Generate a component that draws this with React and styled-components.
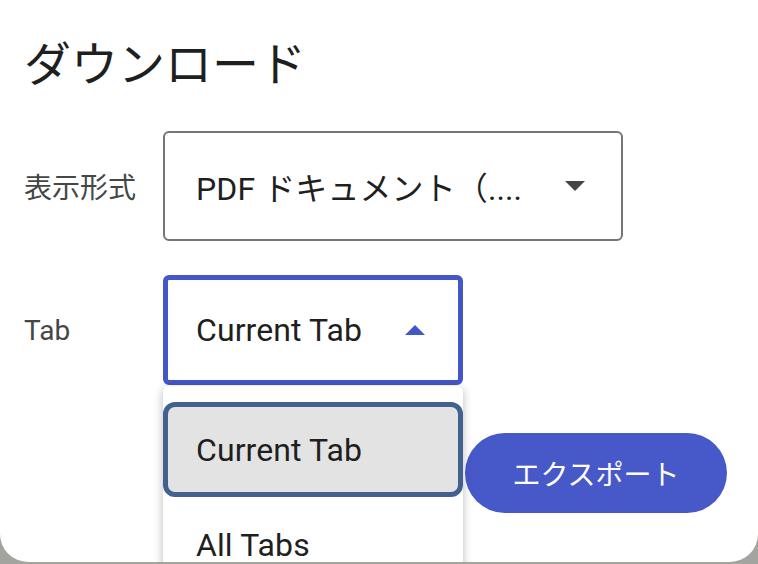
import React from "react";
import styled, { createGlobalStyle } from "styled-components";

const GlobalStyle = createGlobalStyle`
  html, body {
    margin: 0;
    padding: 0;
    overflow: hidden;
    background: #a3a39f;
    font-family: Roboto, "Noto Sans CJK JP", sans-serif;
  }
`;

const Dialog = styled.div`
  box-sizing: border-box;
  width: 758px;
  height: 562px;
  background: #ffffff;
  border-radius: 0 0 28px 28px;
  padding: 37px 31px 0 24px;
  display: flex;
  flex-direction: column;
`;

const Title = styled.h2`
  margin: 0;
  font-size: 47px;
  line-height: 47px;
  font-weight: 400;
  color: #1f1f1f;
  font-family: "Noto Sans CJK JP", sans-serif;
`;

const Form = styled.div`
  margin-top: 47px;
  display: grid;
  grid-template-columns: 139px auto;
  row-gap: 34px;
  align-items: center;
  justify-items: start;
`;

const Label = styled.span`
  font-size: 28px;
  color: #444746;
`;

const Select = styled.div`
  position: relative;
  box-sizing: border-box;
  display: flex;
  align-items: center;
  justify-content: space-between;
  width: ${(p) => p.$width}px;
  height: 110px;
  border: ${(p) => (p.$open ? "5px solid #4457c7" : "2px solid #757575")};
  border-radius: 6px;
  padding-left: ${(p) => (p.$open ? 28 : 31)}px;
  padding-right: ${(p) => (p.$open ? 33 : 36)}px;
  font-size: 32px;
  color: #1f1f1f;
  background: #fff;
`;

const Value = styled.span`
  white-space: nowrap;
  letter-spacing: 0.1px;
`;

const Caret = ({ up, color }) => (
  <svg width="20" height="10" viewBox="0 0 20 10" aria-hidden="true">
    {up ? (
      <polygon points="0,10 10,0 20,10" fill={color} />
    ) : (
      <polygon points="0,0 20,0 10,10" fill={color} />
    )}
  </svg>
);

const Menu = styled.div`
  position: absolute;
  left: -5px;
  top: calc(100% + 6px);
  width: 300px;
  box-sizing: border-box;
  padding-top: 16px;
  background: #fff;
  border-radius: 6px 6px 0 0;
  box-shadow: 0 2px 10px rgba(0, 0, 0, 0.28);
  z-index: 10;
`;

const MenuItem = styled.div`
  box-sizing: border-box;
  height: 95px;
  display: flex;
  align-items: center;
  font-size: 32px;
  letter-spacing: 0.1px;
  color: #1f1f1f;
  padding-left: ${(p) => (p.$selected ? 28 : 33)}px;
  background: ${(p) => (p.$selected ? "#e3e3e3" : "transparent")};
  border: ${(p) => (p.$selected ? "5px solid #42618f" : "none")};
  border-radius: 12px;
`;

const Actions = styled.div`
  margin-top: 48px;
  display: flex;
  justify-content: flex-end;
`;

const Button = styled.button`
  width: 262px;
  height: 80px;
  border: none;
  border-radius: 40px;
  background: #4759c8;
  color: #ffffff;
  font-size: 28px;
  font-family: "Noto Sans CJK JP", sans-serif;
  padding: 0;
`;

export default function App() {
  return (
    <>
      <GlobalStyle />
      <Dialog>
        <Title>ダウンロード</Title>
        <Form>
          <Label>表示形式</Label>
          <Select $width={460}>
            <Value>PDF ドキュメント（....</Value>
            <Caret color="#454545" />
          </Select>
          <Label>Tab</Label>
          <Select $width={300} $open>
            <Value>Current Tab</Value>
            <Caret up color="#4457c7" />
            <Menu>
              <MenuItem $selected>Current Tab</MenuItem>
              <MenuItem>All Tabs</MenuItem>
            </Menu>
          </Select>
        </Form>
        <Actions>
          <Button>エクスポート</Button>
        </Actions>
      </Dialog>
    </>
  );
}
